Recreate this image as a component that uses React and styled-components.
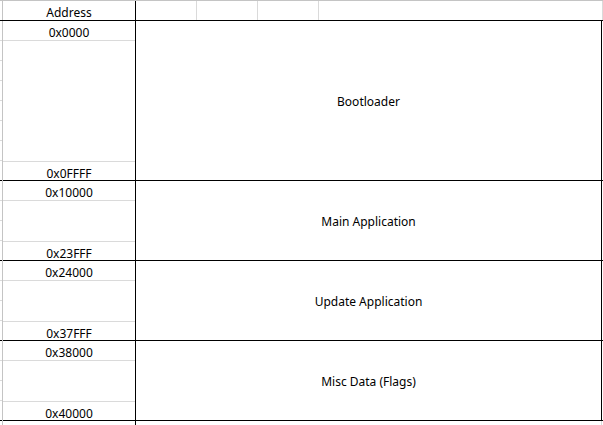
import React from "react";
import styled, { createGlobalStyle } from "styled-components";

const GlobalStyle = createGlobalStyle`
  html, body { margin: 0; padding: 0; background: #ffffff; }
  body { font-family: "Noto Sans", "Open Sans", sans-serif; }
`;

const GRID = "#dadada";
const EDGE = "#c4c4c4";
const INK = "#000000";

const Sheet = styled.div`
  width: 603px;
  height: 425px;
  overflow: hidden;
  display: flex;
  flex-direction: column;
  font-family: "Noto Sans", "Open Sans", sans-serif;
  font-size: 12px;
  color: #000;
  background: #fff;
`;

const HeaderRow = styled.div`
  display: grid;
  grid-template-columns: 3px 133px 61px 61px 61px 1fr;
  height: 21px;
  box-sizing: border-box;
  border-top: 1px solid ${EDGE};
  border-bottom: 1px solid ${INK};
  flex: none;
`;

const Gutter = styled.div`
  box-sizing: border-box;
  border-right: 1px solid ${EDGE};
  display: flex;
  flex-direction: column;
`;

const Tick = styled.div`
  height: 20px;
  flex: none;
  box-sizing: border-box;
  border-bottom: 1px solid ${GRID};
  &:last-child {
    border-bottom: none;
  }
`;

const HeadCell = styled.div`
  box-sizing: border-box;
  border-right: 1px solid ${(p) => (p.$strong ? INK : GRID)};
  display: flex;
  align-items: flex-end;
  justify-content: center;
  line-height: 15px;
`;

const Block = styled.div`
  display: grid;
  grid-template-columns: 3px 133px 466px 1fr;
  height: ${(p) => p.$rows * 20}px;
  box-sizing: border-box;
  border-bottom: 1px solid ${INK};
  flex: none;
`;

const AddressColumn = styled.div`
  box-sizing: border-box;
  border-right: 1px solid ${INK};
  display: flex;
  flex-direction: column;
`;

const AddressCell = styled.div`
  height: ${(p) => (p.$last ? 19 : 20)}px;
  flex: none;
  box-sizing: border-box;
  border-bottom: ${(p) => (p.$last ? "none" : `1px solid ${GRID}`)};
  display: flex;
  align-items: flex-end;
  justify-content: center;
  line-height: 15px;
`;

const MergedGap = styled.div`
  flex: 1;
  box-sizing: border-box;
  border-bottom: 1px solid ${GRID};
`;

const RegionCell = styled.div`
  box-sizing: border-box;
  border-right: 1px solid ${INK};
  display: flex;
  align-items: center;
  justify-content: center;
  padding-top: 1px;
`;

const TailRow = styled.div`
  display: grid;
  grid-template-columns: 3px 133px 466px 1fr;
  flex: 1;
`;

const TailCell = styled.div`
  box-sizing: border-box;
  border-right: 1px solid ${(p) => (p.$strong ? INK : GRID)};
`;

const regions = [
  { label: "Bootloader", start: "0x0000", end: "0x0FFFF", rows: 8 },
  { label: "Main Application", start: "0x10000", end: "0x23FFF", rows: 4 },
  { label: "Update Application", start: "0x24000", end: "0x37FFF", rows: 4 },
  { label: "Misc Data (Flags)", start: "0x38000", end: "0x40000", rows: 4 },
];

export default function App() {
  return (
    <>
      <GlobalStyle />
      <Sheet>
        <HeaderRow>
          <Gutter />
          <HeadCell $strong>Address</HeadCell>
          <HeadCell />
          <HeadCell />
          <HeadCell />
          <HeadCell />
        </HeaderRow>
        {regions.map((r) => (
          <Block key={r.label} $rows={r.rows}>
            <Gutter>
              {Array.from({ length: r.rows }).map((_, i) => (
                <Tick key={i} />
              ))}
            </Gutter>
            <AddressColumn>
              <AddressCell>{r.start}</AddressCell>
              <MergedGap />
              <AddressCell $last>{r.end}</AddressCell>
            </AddressColumn>
            <RegionCell>{r.label}</RegionCell>
            <div />
          </Block>
        ))}
        <TailRow>
          <Gutter />
          <TailCell $strong />
          <TailCell />
          <div />
        </TailRow>
      </Sheet>
    </>
  );
}
